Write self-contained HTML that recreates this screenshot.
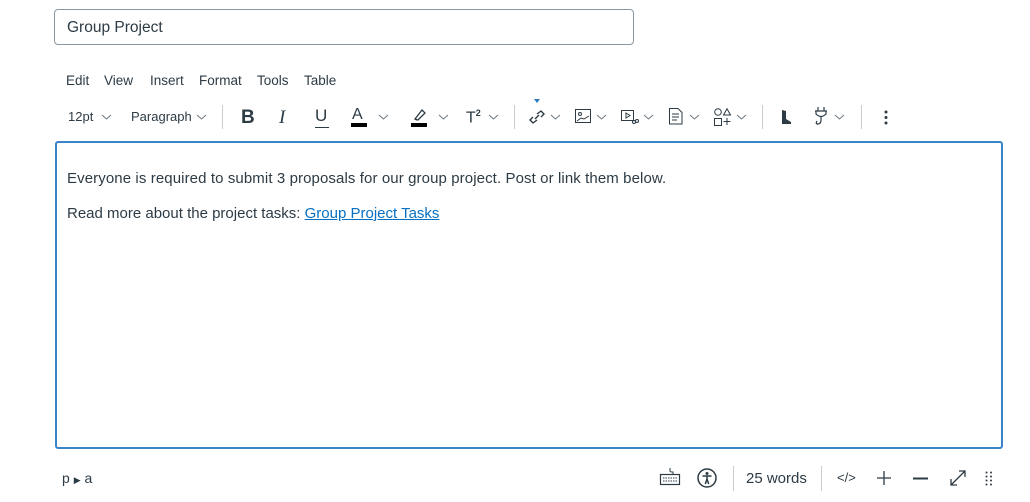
<!DOCTYPE html>
<html><head><style>
*{margin:0;padding:0;box-sizing:border-box}
body{width:1030px;height:502px;background:#fff;font-family:"Liberation Sans",sans-serif;color:#2d3b45;position:relative;overflow:hidden}
.a{position:absolute;white-space:nowrap}
.title{left:54px;top:9px;width:580px;height:36px;border:1px solid #8b969e;border-radius:4px;padding:0 12px;line-height:36px;font-size:15.5px}
.menu{top:73px;font-size:13.5px}
.tb{top:109px;font-size:13px}
.sep{position:absolute;width:1px;background:#c7cdd1}
.ed{left:55px;top:141px;width:948px;height:308px;border:2px solid #3a84c8;border-radius:3px}
.p{font-size:15px;left:67px}
a{color:#0770c2;text-decoration:underline}
svg{position:absolute;overflow:visible}
</style></head><body>
<div class="a title">Group Project</div>
<div class="a menu" style="left:66px">Edit</div>
<div class="a menu" style="left:104px">View</div>
<div class="a menu" style="left:150px">Insert</div>
<div class="a menu" style="left:199px">Format</div>
<div class="a menu" style="left:257px">Tools</div>
<div class="a menu" style="left:304px">Table</div>

<div class="a tb" style="left:68px">12pt</div>
<div class="a tb" style="left:131px">Paragraph</div>
<svg width="0" height="0" style="left:0;top:0">
<defs><path id="cv" d="M0 0 L4.5 4 L9 0" fill="none" stroke="#6b7780" stroke-width="1"/></defs></svg>
<svg style="left:102px;top:115px"><use href="#cv"/></svg>
<svg style="left:197px;top:115px"><use href="#cv"/></svg>
<div class="sep" style="left:222px;top:105px;height:24px"></div>
<div class="a" style="left:241px;top:107px;font-size:19px;font-weight:bold">B</div>
<div class="a" style="left:279px;top:107px;font-size:19px;font-family:'Liberation Serif',serif;font-style:italic">I</div>
<div class="a" style="left:315px;top:106px;font-size:17px">U</div>
<div style="position:absolute;left:315px;top:127px;width:14px;height:1px;background:#2d3b45"></div>
<div class="a" style="left:352px;top:106px;font-size:16px">A</div>
<div style="position:absolute;left:351px;top:123px;width:16px;height:4px;background:#000"></div>
<svg style="left:379px;top:115px"><use href="#cv"/></svg>
<svg style="left:412px;top:108px" width="16" height="14"><path d="M3 11 L10 2 L13 5 L6 12 Z M3 11 L5 12" fill="none" stroke="#2d3b45" stroke-width="1.3"/></svg>
<div style="position:absolute;left:411px;top:123px;width:16px;height:4px;background:#000"></div>
<svg style="left:439px;top:115px"><use href="#cv"/></svg>
<div class="a" style="left:466px;top:108px;font-size:16px">T<sup style="font-size:9px;font-weight:bold">2</sup></div>
<svg style="left:489px;top:115px"><use href="#cv"/></svg>
<div class="sep" style="left:514px;top:105px;height:24px"></div>
<svg style="left:534px;top:99px" width="6" height="5"><path d="M0 0H6L3 4Z" fill="#2b7abc"/></svg>
<svg style="left:528px;top:108px" width="18" height="18"><path d="M7 11 L11 7 M5 9 L2 12 L5 15 L9 12 M13 9 L16 6 L13 3 L9 6" fill="none" stroke="#2d3b45" stroke-width="1.4"/></svg>
<svg style="left:551px;top:115px"><use href="#cv"/></svg>
<svg style="left:575px;top:109px" width="17" height="15"><rect x="0.5" y="0.5" width="15" height="13" fill="none" stroke="#2d3b45"/><circle cx="5" cy="5" r="1.5" fill="none" stroke="#2d3b45"/><path d="M2 12 L6 9 L9 10 L14 7" fill="none" stroke="#2d3b45"/></svg>
<svg style="left:597px;top:115px"><use href="#cv"/></svg>
<svg style="left:621px;top:110px" width="18" height="15"><rect x="0.5" y="0.5" width="12" height="10" fill="none" stroke="#2d3b45"/><path d="M5 3 L9 5.5 L5 8Z" fill="none" stroke="#2d3b45"/><circle cx="13" cy="12" r="1.5" fill="none" stroke="#2d3b45"/><circle cx="16" cy="11" r="1.5" fill="none" stroke="#2d3b45"/></svg>
<svg style="left:644px;top:115px"><use href="#cv"/></svg>
<svg style="left:669px;top:108px" width="14" height="17"><path d="M0.5 0.5 H9 L13 4.5 V16 H0.5 Z M3 6H10 M3 9H10 M3 12H8" fill="none" stroke="#2d3b45"/></svg>
<svg style="left:690px;top:115px"><use href="#cv"/></svg>
<svg style="left:714px;top:108px" width="18" height="18"><circle cx="4" cy="4" r="3.3" fill="none" stroke="#2d3b45"/><path d="M13 0.8 L16.5 7 H9.5Z M0.5 10.5H7.5V17.5H0.5Z M13 10V17 M9.5 13.5H16.5" fill="none" stroke="#2d3b45"/></svg>
<svg style="left:737px;top:115px"><use href="#cv"/></svg>
<div class="sep" style="left:762px;top:105px;height:24px"></div>
<svg style="left:782px;top:110px" width="12" height="14"><path d="M0 0 L4 1 V14 H0Z M4 9 L9 12 V14 H4Z" fill="#2d3b45"/></svg>
<svg style="left:814px;top:107px" width="16" height="20"><path d="M4 0V4 M10 0V4 M1 4H13 M2 4 V7 Q7 12 12 7 V4 M7 10 V13 Q7 17 4 17 Q1 17 3 14" fill="none" stroke="#2d3b45" stroke-width="1.2"/></svg>
<svg style="left:835px;top:115px"><use href="#cv"/></svg>
<div class="sep" style="left:861px;top:105px;height:24px"></div>
<svg style="left:884px;top:110px" width="4" height="16"><circle cx="2" cy="2" r="1.5" fill="#2d3b45"/><circle cx="2" cy="7.5" r="1.5" fill="#2d3b45"/><circle cx="2" cy="13" r="1.5" fill="#2d3b45"/></svg>

<div class="a ed"></div>
<div class="a p" style="top:170px;letter-spacing:0.1px">Everyone is required to submit 3 proposals for our group project. Post or link them below.</div>
<div class="a p" style="top:205px">Read more about the project tasks: <a>Group Project Tasks</a></div>

<div class="a" style="left:62px;top:470px;font-size:14px">p <span style="font-size:9px">▶</span> a</div>
<svg style="left:660px;top:468px" width="20" height="18"><path d="M10 0 V3 Q10 4 12 4 H13 V6" fill="none" stroke="#2d3b45"/><rect x="0.5" y="6.5" width="19" height="10" fill="none" stroke="#2d3b45" stroke-width="1.2"/><path d="M3 10H17 M3 13H17" stroke="#2d3b45" stroke-dasharray="1.5 1"/></svg>
<svg style="left:697px;top:468px" width="20" height="20"><circle cx="10" cy="10" r="9" fill="none" stroke="#2d3b45" stroke-width="1.5"/><circle cx="10" cy="5.5" r="1.5" fill="#2d3b45"/><path d="M5.5 8H14.5 M10 8V12 M8.3 16 L10 11 L11.7 16" fill="none" stroke="#2d3b45" stroke-width="1.5"/></svg>
<div class="sep" style="left:733px;top:466px;height:25px"></div>
<div class="a" style="left:746px;top:470px;font-size:15px">25 words</div>
<div class="sep" style="left:821px;top:466px;height:25px"></div>
<div class="a" style="left:837px;top:470px;font-size:13px">&lt;/&gt;</div>
<svg style="left:877px;top:471px" width="14" height="14"><path d="M7 0V14 M0 7H14" stroke="#2d3b45" stroke-width="1.3"/></svg>
<svg style="left:913px;top:477px" width="15" height="3"><path d="M0 1.5H15" stroke="#2d3b45" stroke-width="2"/></svg>
<svg style="left:950px;top:470px" width="16" height="16"><path d="M1 15 L15 1 M9 1H15V7 M1 9V15H7" fill="none" stroke="#2d3b45" stroke-width="1.3"/></svg>
<svg style="left:985px;top:471px" width="8" height="16"><g fill="#2d3b45"><circle cx="1.5" cy="1.5" r="1"/><circle cx="6" cy="1.5" r="1"/><circle cx="1.5" cy="5.5" r="1"/><circle cx="6" cy="5.5" r="1"/><circle cx="1.5" cy="9.5" r="1"/><circle cx="6" cy="9.5" r="1"/><circle cx="1.5" cy="13.5" r="1"/><circle cx="6" cy="13.5" r="1"/></g></svg>
</body></html>
